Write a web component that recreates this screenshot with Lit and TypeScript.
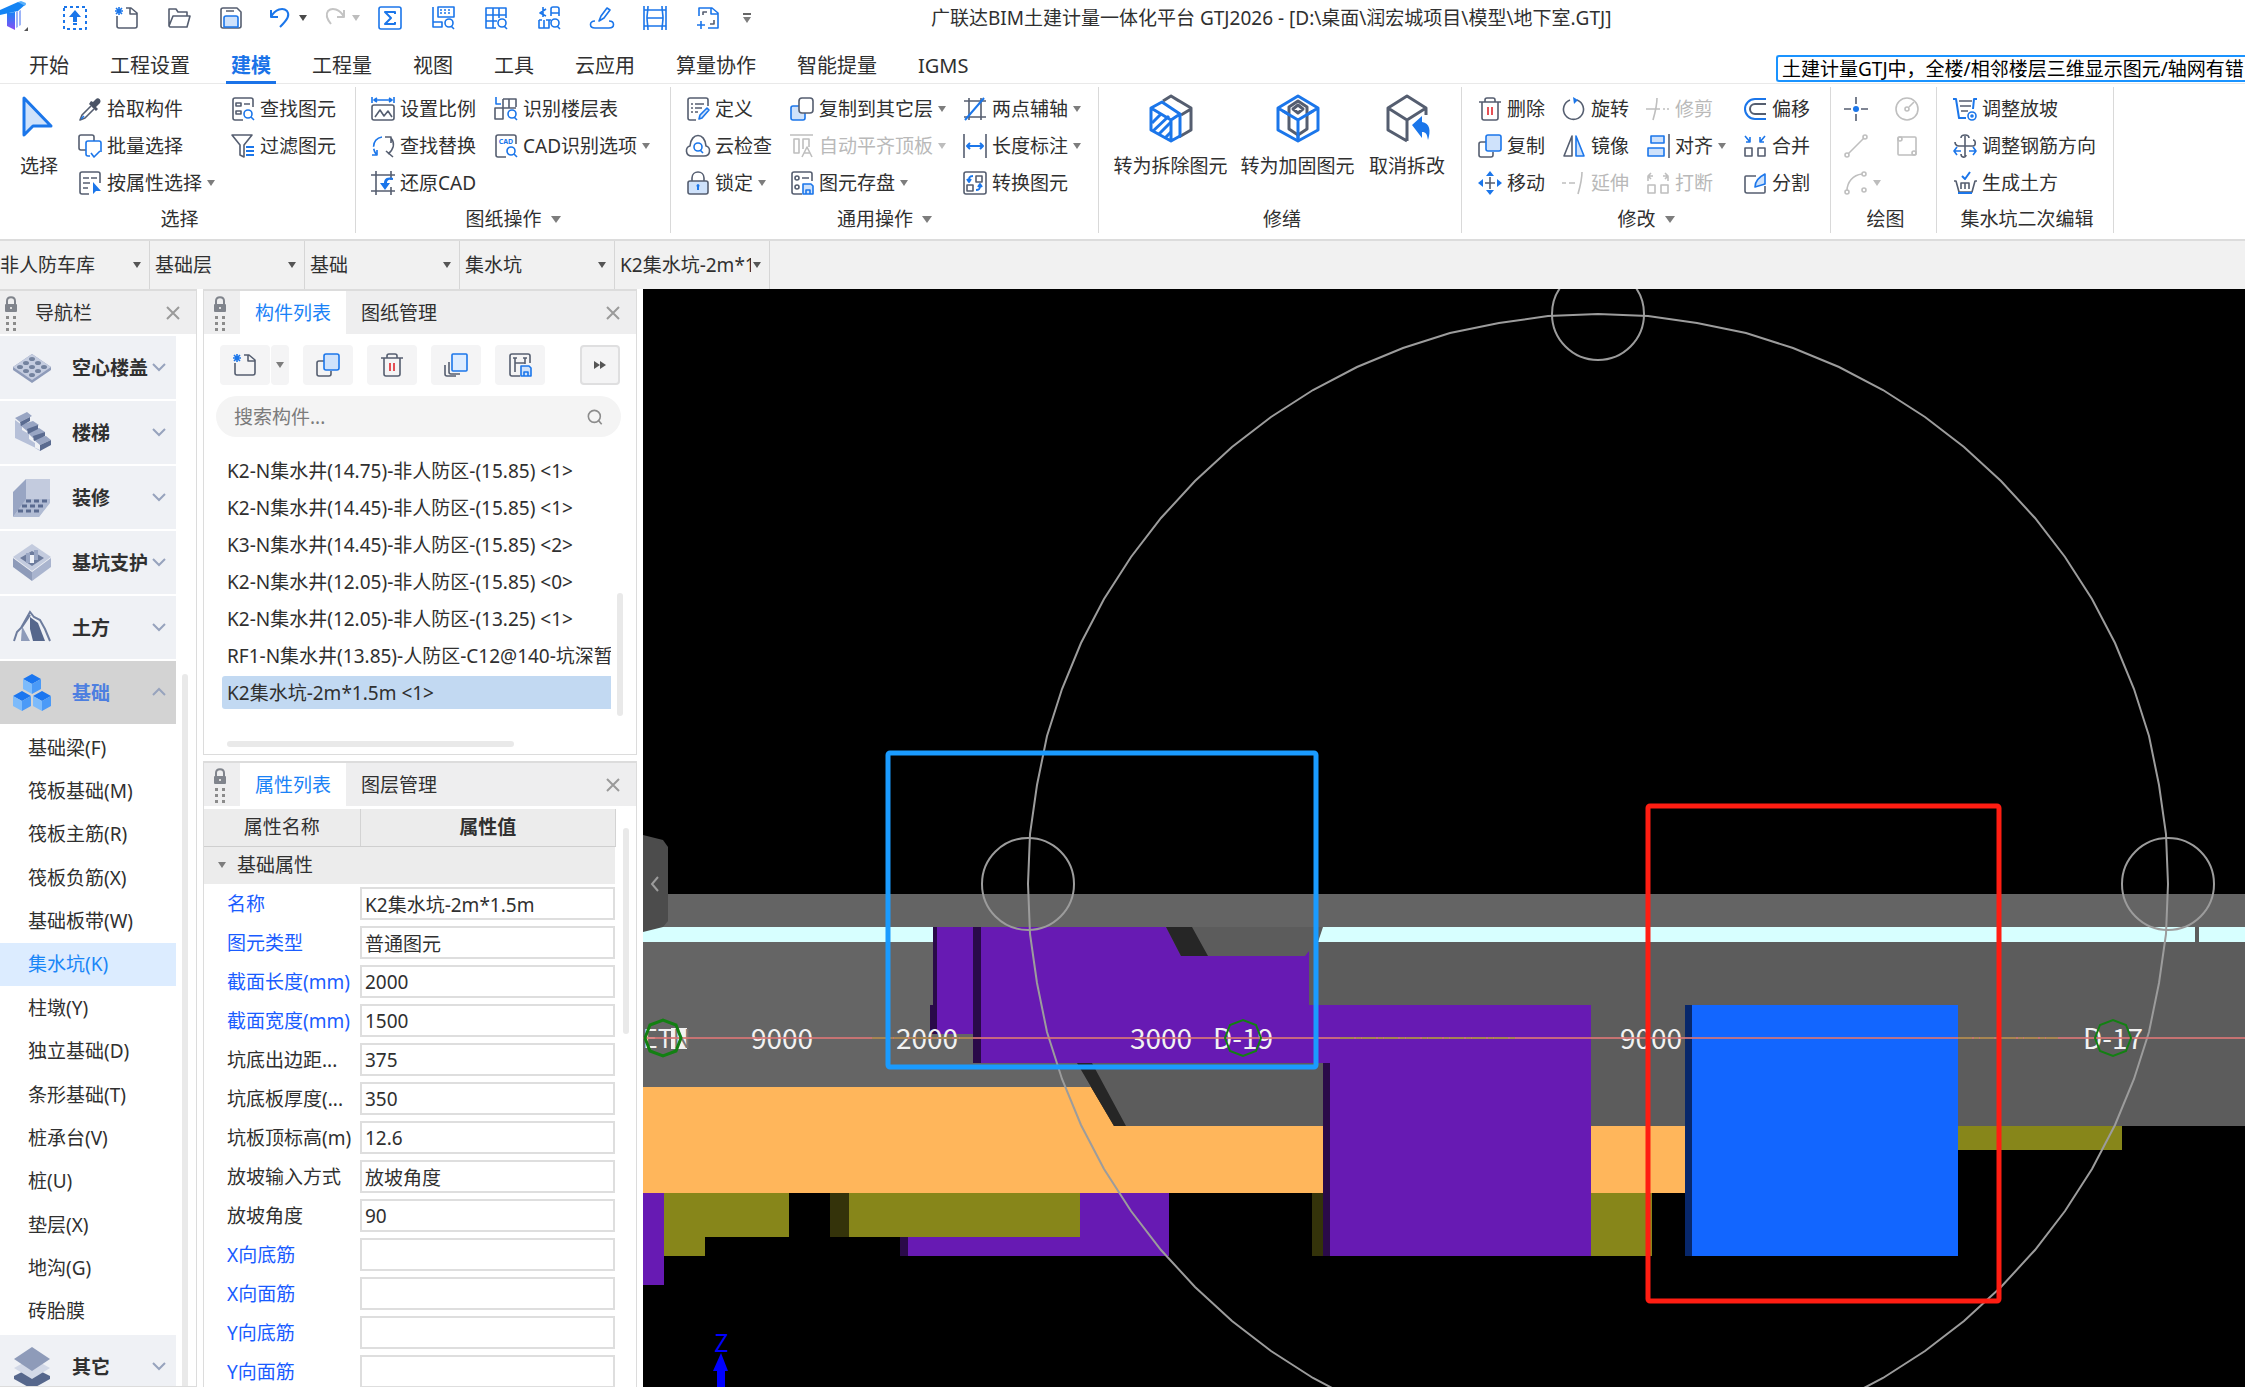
import { LitElement, html, svg, css, nothing } from "lit";
import { customElement, state } from "lit/decorators.js";
import { classMap } from "lit/directives/class-map.js";

/* ---------- icons, drawn on a 24 x 24 grid unless noted ---------- */

const icons: Record<string, unknown> = {
  upload: svg`<rect class="b dash" x="1" y="1" width="22" height="22"/><path class="bf" d="M12 4l6 7h-4v5h-4v-5H6z"/><path class="b w2" d="M10 18h4"/>`,
  newFile: svg`<path class="k" d="M2 10v10a2 2 0 0 0 2 2h16a2 2 0 0 0 2-2V7l-6-5h-5M15 2v6h7"/><path class="b" d="M1 2l6 6M7 2L1 8M4 1v8M0 5h8"/>`,
  open: svg`<path class="k" d="M2 20V3h7l2 3h9v4M2 20L6 10h17l-3 11H3z"/>`,
  save: svg`<path class="k" d="M4 2h14l4 4v14a2 2 0 0 1-2 2H4a2 2 0 0 1-2-2V4a2 2 0 0 1 2-2zM7 5h8"/><path class="l" d="M5 21v-9a2 2 0 0 1 2-2h10a2 2 0 0 1 2 2v9z"/>`,
  undo: svg`<path class="b w2" d="M2 4v7h7M2 11C6 3 14 1 18 5c3 4 1 8-7 16"/>`,
  redo: svg`<path class="off w2" d="M22 4v7h-7M22 11C18 3 10 1 6 5c-3 4-1 8 3 13"/>`,
  sum: svg`<rect class="b" x="1" y="1" width="22" height="22" rx="2"/><path class="b w2" d="M17 8V6H7l6 6-6 6h10v-2"/>`,
  calcFind: svg`<rect class="b" x="7" y="1" width="16" height="10"/><path class="b" d="M9 4h12M9 7h12" stroke-dasharray="2 2"/><path class="b" d="M2 1v20h9v-5H2"/><circle class="b" cx="18" cy="17" r="4"/><path class="b" d="M20 20l3 3"/>`,
  gridFind: svg`<path class="b" d="M12 22H2V2h20v10M9 2v20M15 2v10M2 9h20M2 15h11"/><circle class="b" cx="18" cy="17" r="4"/><path class="b" d="M20 20l3 3"/>`,
  partFind: svg`<path class="b" d="M9 3L3 7l6 3M6 1v10M14 10V3a2 2 0 0 1 2-2h4a2 2 0 0 1 2 2v7M14 7h8M2 14v8h10v-8M7 14v8M2 14h3M9 14h5"/><circle class="b" cx="18" cy="17" r="4"/><path class="b" d="M20 20l3 3"/>`,
  brush: svg`<path class="b" d="M9 15l2-5 6-8 3 2-6 8zM5 15c-6 0-6 7 0 7h14c6 0 6-7 0-7"/>`,
  frame: svg`<path class="b" d="M1 0v24M23 0v24M5 0c0 5-1 8-1 12s1 7 1 12M19 0c0 5 1 8 1 12s-1 7-1 12M1 4h22M4 12h16M1 20h22"/>`,
  docAdd: svg`<path class="b" d="M3 10V2h13l6 5v15H12M15 2v6h7M1 19h8M5 15v8"/><path class="k" d="M7 9V6h4M18 14v4h-4"/>`,
  picker: svg`<path class="k" d="M13 9l-9 9-2 5 5-2 9-9"/><path class="kf" d="M11 7l7 7 2-2-2-2 4-4c2-3-2-6-4-4l-3 3-2-1z"/><path class="b" d="M3 22l3-3"/>`,
  batch: svg`<rect class="k" x="1" y="1" width="15" height="15" rx="2"/><path class="lw" d="M12 22H10a2 2 0 0 1-2-2V9a2 2 0 0 1 2-2h11a2 2 0 0 1 2 2v9"/><path class="b" d="M13 19l3 4 6-6"/>`,
  attrSel: svg`<path class="k" d="M22 12V3a2 2 0 0 0-2-2H4a2 2 0 0 0-2 2v18a2 2 0 0 0 2 2h7M5 7h6M13 7h6M5 12h7M5 17h5"/><path class="bf" d="M15 11v12l3-3h5z"/>`,
  findEl: svg`<path class="k" d="M22 10V3a2 2 0 0 0-2-2H4a2 2 0 0 0-2 2v18a2 2 0 0 0 2 2h8M5 6h5v3H5zM13 7h6M5 14h5v3H5z"/><circle class="b" cx="17" cy="17" r="4"/><path class="b" d="M20 20l3 3"/>`,
  filter: svg`<path class="k" d="M1 1h20l-8 10v12l-4-2V11z"/><path class="b w2" d="M15 13h8M15 17h8M15 21h8"/>`,
  scale: svg`<path class="b" d="M1 0v6M23 0v6M3 3h18M6 1L3 3l3 2M18 1l3 2-3 2"/><rect class="k" x="1" y="8" width="22" height="15" rx="2"/><path class="k" d="M4 20l5-7 4 6 4-5 4 6"/>`,
  replace: svg`<path class="b" stroke-dasharray="14 2" d="M11 3C3 4 0 13 5 20M1 21h5v-5"/><path class="k" d="M14 3h6v6M20 4c4 5 3 11-3 16M15 17l7 6"/>`,
  restore: svg`<path class="k" d="M5 0v24M0 4h24M20 0v9M0 20h24M20 16v8"/><path class="bf" d="M22 7c-8-2-9 3-9 5h-4l5 7 5-7h-3c0-2 1-4 6-3z"/>`,
  floorTab: svg`<path class="b" d="M2 0v7h5"/><path class="k" d="M9 2h13v8M9 2v20H1V11h21M15 2v9"/><circle class="b" cx="18" cy="17" r="4"/><path class="b" d="M20 20l3 3"/>`,
  cadOpt: svg`<path class="k" d="M22 10V3a2 2 0 0 0-2-2H4a2 2 0 0 0-2 2v18a2 2 0 0 0 2 2h8"/><text class="cad" x="12" y="10" text-anchor="middle">CAD</text><circle class="b" cx="17" cy="17" r="4"/><path class="b" d="M20 20l3 3"/>`,
  define: svg`<path class="k" d="M22 9V3a2 2 0 0 0-2-2H4a2 2 0 0 0-2 2v18a2 2 0 0 0 2 2h6M5 7h2M9 7h9M5 11h2M9 11h7M5 15h2M9 15h3"/><path class="l" d="M13 22l1-4 7-7 2 2-7 8z"/>`,
  cloud: svg`<path class="k" d="M6 22C-1 22-1 13 4 12 5-2 19-2 20 12c5 1 5 10-2 10z"/><circle class="b" cx="12" cy="13" r="4"/><path class="b" d="M14 16l3 3"/>`,
  lock: svg`<rect class="lk" x="2" y="10" width="20" height="13" rx="2"/><path class="k" d="M6 10V7c0-8 12-8 12 0v3"/><path class="bf" d="M12 13a2 2 0 0 1 1 3v3h-2v-3a2 2 0 0 1 1-3z"/>`,
  copyFloor: svg`<rect class="l" x="1" y="9" width="14" height="14" rx="2"/><rect class="kw" x="9" y="1" width="14" height="15" rx="3"/>`,
  alignTop: svg`<path class="k" d="M0 1h23M4 5h5v14H4zM13 15V5h6v8M12 23l5-10 5 10M14 19h6"/>`,
  store: svg`<path class="k" d="M22 10V3a2 2 0 0 0-2-2H4a2 2 0 0 0-2 2v18a2 2 0 0 0 2 2h8M12 7h7"/><circle class="k" cx="7" cy="7" r="2"/><circle class="k" cx="7" cy="16" r="2"/><path class="l" d="M13 13h8l2 2v8H13zM16 23v-4h4v4"/>`,
  axis: svg`<path class="k" d="M6 1v22M18 1v22M1 4h22M1 20h22"/><path class="b w2" d="M2 23L21 1"/>`,
  dim: svg`<path class="k" d="M1 0v24M23 0v24"/><path class="b w2" d="M4 12h16M7 9l-3 3 3 3M17 9l3 3-3 3"/>`,
  convert: svg`<rect class="k" x="1" y="1" width="22" height="22" rx="2"/><path class="k" d="M13 5h6v6h-6zM4 14h6v6H4z"/><path class="b w2" d="M10 5c-4 0-4 2-4 5M4 8l2 3 2-3M13 19c4 0 4-2 4-4M15 16l2-3 2 3"/>`,
  trash: svg`<path class="k" d="M1 5h22M7 5V3a2 2 0 0 1 2-2h6a2 2 0 0 1 2 2v2M4 5v16a2 2 0 0 0 2 2h12a2 2 0 0 0 2-2V5"/><path class="r" d="M10 10v8M14 10v8"/>`,
  copy: svg`<path class="k" d="M9 8H3a2 2 0 0 0-2 2v11a2 2 0 0 0 2 2h10a2 2 0 0 0 2-2v-3"/><rect class="l" x="8" y="1" width="15" height="16" rx="2"/>`,
  move: svg`<path class="k" d="M12 6v12M7 12h10"/><path class="bf" d="M12 0l4 5H8zM12 24l4-5H8zM0 12l5-4v8zM24 12l-5-4v8z"/>`,
  rotate: svg`<path class="k" d="M15 3a10 10 0 1 1-7 0"/><path class="bf" d="M11 0l5 3-4 4z"/>`,
  mirror: svg`<path class="k" d="M10 2v20H2z"/><path class="l" d="M14 2v20h8z"/>`,
  extend: svg`<path class="k" d="M0 12h4M7 12h6M16 23c2-7 4-14 4-22"/>`,
  trim: svg`<path class="k" d="M7 23c2-7 4-14 4-22M0 12h14M17 12h2M21 12h2"/>`,
  align: svg`<path class="k" d="M23 0v24"/><rect class="l" x="5" y="2" width="13" height="7"/><rect class="l" x="2" y="14" width="16" height="8"/>`,
  split: svg`<path class="k" d="M2 14h7v8H2zM15 14h7v8h-7zM7 5H2M5 2L2 5l3 3M2 5v5M17 5h5M19 2l3 3-3 3M22 5v5"/>`,
  offset: svg`<path class="b w2" d="M23 2H12a10 10 0 0 0 0 20h11"/><path class="k w2" d="M23 7H12a5 5 0 0 0 0 10h11"/>`,
  merge: svg`<path class="k" d="M2 14h7v8H2zM15 14h7v8h-7z"/><path class="b" d="M2 2l5 6M7 3v5H3M22 2l-5 6M17 3v5h4"/>`,
  divide: svg`<path class="k" d="M13 5H3a1 1 0 0 0-1 1v14a2 2 0 0 0 2 2h17a1 1 0 0 0 1-1v-6"/><path class="l" d="M12 16c0-5 4-10 10-13v10z"/>`,
  point: svg`<path class="k" d="M12 0v7M12 17v7M0 12h7M17 12h7"/><circle class="bf" cx="12" cy="12" r="3"/>`,
  circle: svg`<circle class="k" cx="12" cy="12" r="11"/><circle class="k" cx="12" cy="12" r="2"/><path class="k" d="M14 10l5-5"/>`,
  line: svg`<path class="k" d="M4 20L20 4"/><circle class="k" cx="3" cy="21" r="2"/><circle class="k" cx="21" cy="3" r="2"/>`,
  rect: svg`<rect class="k" x="3" y="3" width="18" height="18" rx="1"/><circle class="k" cx="5" cy="5" r="2"/><circle class="k" cx="19" cy="19" r="2"/>`,
  arc: svg`<path class="k" d="M3 20C3 11 9 4 18 3"/><circle class="k" cx="3" cy="21" r="2"/><circle class="k" cx="20" cy="3" r="2"/><circle class="k" cx="20" cy="19" r="2"/>`,
  slope: svg`<path class="b w2" d="M0 2h3l3 19h7M24 2h-3l-1 10"/><path class="k" d="M6 4h13M7 9h11M8 14h7"/><circle class="b" cx="19" cy="19" r="4"/><circle class="b" cx="19" cy="19" r="1"/>`,
  rebar: svg`<path class="k" d="M12 2v20M2 8c0 5 5 4 10 4h8c3 0 3-6 0-6M8 4c0-4 8-4 8 0M8 20c0 4 5 4 5 1"/><path class="b" d="M8 17H1M4 13l-3 4 3 4M16 17h7M20 13l3 4-3 4"/>`,
  earth: svg`<path class="b w2" d="M9 5l3 3 5-7"/><path class="k" d="M1 10h2l3 11h13l3-11h2M8 18v-6h8v6M12 12v6"/><path class="b w2" d="M5 22h14"/>`,
  multi: svg`<path class="k" d="M5 9v10a2 2 0 0 0 2 2h9M1 12v9a2 2 0 0 0 2 2h9"/><rect class="l pale" x="8" y="1" width="15" height="17" rx="1"/>`,
  saveFrame: svg`<path class="k" d="M22 10V3a2 2 0 0 0-2-2H4a2 2 0 0 0-2 2v18a2 2 0 0 0 2 2h8M7 5v14M17 5v6M7 10h10M5 5h4M15 5h4"/><path class="l" d="M13 13h8l2 2v8H13zM16 23v-4h4v4"/>`,
  search: svg`<circle class="g" cx="11" cy="11" r="9"/><path class="g" d="M17 17l5 6"/>`,
};

const icon = (name: string, cls = "") => html`<svg class="ic ${cls}" viewBox="0 0 24 24" aria-hidden="true">${icons[name]}</svg>`;

/* large ribbon icons, 44 x 50 */
const bigIcons: Record<string, unknown> = {
  select: svg`<path class="l w3" d="M7 5v37l9-9h18z"/>`,
  demolish: svg`<path class="k w3" d="M14 8l8-5 20 12v22l-12 7M32 22l10-6M30 8l-8-5"/><path class="b w3" d="M2 15l11-6 18 12v22l-9 5L2 37zM2 15l20 12v20M22 27l9-6"/><path class="b w3" d="M3 30l9-9M4 38l16-15M10 41l12-12M16 45l6-6"/>`,
  reinforce: svg`<path class="b w3" d="M22 3l20 12v22L22 48 2 37V15zM2 15l20 12 20-12M22 27v21"/><path class="kw w3" d="M22 8l9 6v22l-9 6-9-6V14z"/><path class="b w3" d="M7 18l15 9 15-9M22 27v18"/><path class="k w3" d="M22 12l5 4-5 4-5-4z"/>`,
  cancel: svg`<path class="k w3" d="M41 22v-7L22 3 3 15v22l19 11M3 15l19 12 19-12M22 27v21"/><path class="bf" d="M27 32l10-9v6c8 1 9 9 6 18-1-6-2-8-6-8v6z"/>`,
};

const iconCss = css`
  .ic { width: 24px; height: 24px; flex: none; overflow: visible; stroke-width: 1.6; stroke-linejoin: round; }
  .k { stroke: #555e70; fill: none; }
  .kw { stroke: #555e70; fill: #fff; }
  .kf { fill: #4a5365; }
  .lk { stroke: #555e70; fill: #cfe2fb; }
  .b { stroke: #1b76ea; fill: none; }
  .bf { fill: #1b76ea; }
  .l { stroke: #1b76ea; fill: #cfe2fb; }
  .pale { fill: #ddecff; }
  .lw { stroke: #1b76ea; fill: #fff; }
  .r { stroke: #e0262c; fill: none; }
  .g { stroke: #8c8c8c; fill: none; }
  .off { stroke: #c4c4c4; fill: none; }
  .w2 { stroke-width: 2; }
  .w3 { stroke-width: 3; }
  .dash { stroke-dasharray: 3 3; stroke-width: 2; }
  .cad { font-size: 7px; font-weight: 700; fill: #1b76ea; }
  .dim .k, .dim .b { stroke: #bfbfbf; }
`;

const base = css`
  :host, * { box-sizing: border-box; }
  button, input, select {
    font: inherit; color: inherit; background: none; border: 0; margin: 0; padding: 0; text-align: left; border-radius: 0;
  }
  button { cursor: pointer; white-space: nowrap; }
  .tri { width: 0; height: 0; flex: none; border: 4px solid transparent; border-top: 6px solid #7d7d7d; border-bottom: 0; }
  .grow { flex: 1; }
`;

/* ---------- title bar, tabs, ribbon ---------- */

type Cmd = { i: string; t?: string; arrow?: boolean; dim?: boolean; label?: string } | null;
type Group = { id: string; title: string; arrow?: boolean; big?: { i: string; t: string }[]; cols?: Cmd[][] };

const groups: Group[] = [
  {
    id: "select", title: "选择", big: [{ i: "select", t: "选择" }],
    cols: [
      [{ i: "picker", t: "拾取构件" }, { i: "batch", t: "批量选择" }, { i: "attrSel", t: "按属性选择", arrow: true }],
      [{ i: "findEl", t: "查找图元" }, { i: "filter", t: "过滤图元" }],
    ],
  },
  {
    id: "drawing", title: "图纸操作", arrow: true,
    cols: [
      [{ i: "scale", t: "设置比例" }, { i: "replace", t: "查找替换" }, { i: "restore", t: "还原CAD" }],
      [{ i: "floorTab", t: "识别楼层表" }, { i: "cadOpt", t: "CAD识别选项", arrow: true }],
    ],
  },
  {
    id: "common", title: "通用操作", arrow: true,
    cols: [
      [{ i: "define", t: "定义" }, { i: "cloud", t: "云检查" }, { i: "lock", t: "锁定", arrow: true }],
      [{ i: "copyFloor", t: "复制到其它层", arrow: true }, { i: "alignTop", t: "自动平齐顶板", arrow: true, dim: true }, { i: "store", t: "图元存盘", arrow: true }],
      [{ i: "axis", t: "两点辅轴", arrow: true }, { i: "dim", t: "长度标注", arrow: true }, { i: "convert", t: "转换图元" }],
    ],
  },
  {
    id: "repair", title: "修缮",
    big: [{ i: "demolish", t: "转为拆除图元" }, { i: "reinforce", t: "转为加固图元" }, { i: "cancel", t: "取消拆改" }],
  },
  {
    id: "modify", title: "修改", arrow: true,
    cols: [
      [{ i: "trash", t: "删除" }, { i: "copy", t: "复制" }, { i: "move", t: "移动" }],
      [{ i: "rotate", t: "旋转" }, { i: "mirror", t: "镜像" }, { i: "extend", t: "延伸", dim: true }],
      [{ i: "trim", t: "修剪", dim: true }, { i: "align", t: "对齐", arrow: true }, { i: "split", t: "打断", dim: true }],
      [{ i: "offset", t: "偏移" }, { i: "merge", t: "合并" }, { i: "divide", t: "分割" }],
    ],
  },
  {
    id: "draw", title: "绘图",
    cols: [
      [{ i: "point", label: "点" }, { i: "line", dim: true, label: "直线" }, { i: "arc", dim: true, arrow: true, label: "弧" }],
      [{ i: "circle", dim: true, label: "圆" }, { i: "rect", dim: true, label: "矩形" }],
    ],
  },
  {
    id: "sump", title: "集水坑二次编辑",
    cols: [[{ i: "slope", t: "调整放坡" }, { i: "rebar", t: "调整钢筋方向" }, { i: "earth", t: "生成土方" }]],
  },
];

@customElement("gtj-ribbon")
class GtjRibbon extends LitElement {
  static styles = [base, iconCss, css`
    :host { display: block; background: #fff; }
    .title { display: flex; align-items: center; height: 36px; white-space: nowrap; }
    .logo { width: 49px; height: 36px; flex: none; }
    .qa { width: 52px; height: 36px; display: flex; align-items: center; justify-content: center; }
    .tools .qa { width: 53px; }
    .hist { width: 53px; display: flex; align-items: center; justify-content: flex-end; gap: 6px; padding-right: 3px; }
    .hist button { display: flex; }
    .tri.dark { border-top-color: #4a4a4a; }
    .tri.faint { border-top-color: #bdbdbd; }
    .tools { display: flex; }
    .more { width: 26px; display: flex; flex-direction: column; align-items: center; gap: 2px; }
    .more i { width: 8px; height: 2px; background: #666; }
    .name { margin: 0 0 0 171px; font-size: 19px; font-weight: 400; line-height: 24px; }
    .tabs { display: flex; gap: 31px; height: 48px; border-bottom: 1px solid #e9e9e9; padding-left: 24px; font-size: 20px; }
    .tab { height: 48px; padding: 12px 5px 0; white-space: nowrap; }
    .tab.on { color: #1b73e8; font-weight: 700; box-shadow: inset 0 -3px #1b73e8; }
    .ticker {
      width: 469px; height: 27px; margin-top: 19px; flex: none; align-self: flex-start; overflow: hidden;
      border: 2px solid #1a93ff; border-right: 0; border-radius: 3px 0 0 3px; padding-left: 4px;
      font-size: 19px; line-height: 24px; color: #000; text-decoration: none; white-space: nowrap;
    }
    .ribbon { display: flex; height: 155px; padding: 3px 0 6px; }
    .group { display: flex; flex-direction: column; border-right: 1px solid #d9d9d9; padding-top: 3px; }
    .cols { display: grid; height: 111px; }
    .col { display: flex; flex-direction: column; }
    .cmd { height: 37px; display: flex; align-items: center; gap: 5px; }
    .cmd.dim { color: #b9b9b9; }
    .cmd.dim .tri { border-top-color: #bdbdbd; }
    .big { display: flex; flex-direction: column; align-items: center; gap: 11px; padding-top: 3px; }
    .big svg { width: 44px; height: 50px; overflow: visible; stroke-linejoin: round; }
    .foot { height: 32px; padding: 4px 0 0 4px; display: flex; align-items: center; justify-content: center; gap: 9px; }
    .foot.menu { padding-left: 0; }
    .foot .tri { border-width: 7px 5px 0; }
    .select .cols { grid-template-columns: 78px 153px 124px; }
    .drawing .cols { grid-template-columns: 123px 176px; padding-left: 15px; }
    .common .cols { grid-template-columns: 104px 173px 135px; padding-left: 15px; }
    .repair .cols { grid-template-columns: 127px 127px 92px; padding: 0 8px; }
    .modify .cols { grid-template-columns: 84px 84px 97px 87px; padding-left: 16px; }
    .draw .cols { grid-template-columns: 51px 41px; padding-left: 13px; }
    .sump .cols { grid-template-columns: 160px; padding-left: 16px; }
  `];

  private tabs = ["开始", "工程设置", "建模", "工程量", "视图", "工具", "云应用", "算量协作", "智能提量", "IGMS"];
  @state() private active = "建模";

  private cmd(c: Cmd) {
    if (!c) return nothing;
    return html`<button class=${classMap({ cmd: true, dim: !!c.dim })} ?disabled=${!!c.dim} aria-label=${c.t ?? c.label ?? ""}>
      ${icon(c.i)}${c.t ? html`<span>${c.t}</span>` : nothing}${c.arrow ? html`<span class="tri"></span>` : nothing}
    </button>`;
  }

  render() {
    const files: [string, string][] = [["upload", "上传"], ["newFile", "新建"], ["open", "打开"], ["save", "保存"]];
    const tools: [string, string][] = [
      ["sum", "汇总计算"], ["calcFind", "查看工程量"], ["gridFind", "查看报表"], ["partFind", "查找构件"],
      ["brush", "做法刷"], ["frame", "钢筋三维"], ["docAdd", "添加图纸"],
    ];
    return html`
      <header class="title">
        <svg class="logo" viewBox="0 0 49 36" aria-hidden="true">
          <defs><linearGradient id="lg" x1="0" y1="0" x2="0" y2="1"><stop offset="0" stop-color="#1584f5"/><stop offset="1" stop-color="#8a4df5"/></linearGradient></defs>
          <path fill="#1484f4" d="M0 10L18 2l8 2-8 7L0 15z"/>
          <path fill="#5ab0fa" d="M18 2l3-1 5 2-1 3z"/>
          <path fill="url(#lg)" d="M7 13l8-1v18l-8-4z"/>
          <path fill="#9db4f8" d="M16 12l2-1v16l-2 1zM19 11l2-1v15l-2 1z"/>
          <path fill="#555" d="M28 27v4h-4z"/>
        </svg>
        ${files.map(([i, l]) => html`<button class="qa" aria-label=${l}>${icon(i)}</button>`)}
        <div class="hist"><button aria-label="撤销">${icon("undo")}</button><button aria-label="撤销记录"><span class="tri dark"></span></button></div>
        <div class="hist"><button aria-label="恢复">${icon("redo")}</button><button aria-label="恢复记录"><span class="tri faint"></span></button></div>
        <div class="tools">${tools.map(([i, l]) => html`<button class="qa" aria-label=${l}>${icon(i)}</button>`)}</div>
        <button class="more" aria-label="自定义快速访问栏"><i></i><span class="tri"></span></button>
        <h1 class="name">广联达BIM土建计量一体化平台 GTJ2026 - [D:\\桌面\\润宏城项目\\模型\\地下室.GTJ]</h1>
      </header>
      <nav class="tabs">
        ${this.tabs.map((t) => html`<button class=${classMap({ tab: true, on: t === this.active })} @click=${() => (this.active = t)}>${t}</button>`)}
        <span class="grow"></span>
        <a class="ticker" href="#notice">土建计量GTJ中，全楼/相邻楼层三维显示图元/轴网有错</a>
      </nav>
      <div class="ribbon">
        ${groups.map((g) => html`<section class="group ${g.id}">
          <div class="cols">
            ${g.big?.map((b) => html`<button class="big"><svg viewBox="0 0 44 50" aria-hidden="true">${bigIcons[b.i]}</svg><span>${b.t}</span></button>`)}
            ${g.cols?.map((c) => html`<div class="col">${c.map((x) => this.cmd(x))}</div>`)}
          </div>
          <div class=${classMap({ foot: true, menu: !!g.arrow })}><span>${g.title}</span>${g.arrow ? html`<span class="tri"></span>` : nothing}</div>
        </section>`)}
      </div>`;
  }
}

/* ---------- floor and component selectors ---------- */

@customElement("gtj-selectors")
class GtjSelectors extends LitElement {
  static styles = [base, css`
    :host { display: flex; height: 50px; background: #f1f1f1; border-top: 2px solid #dcdcdc; }
    .pick { display: grid; grid-template-columns: 1fr auto; align-items: center; width: 155px; border-right: 1px solid #d6d6d6; }
    .pick:first-child { width: 150px; }
    .pick:first-child select { padding-left: 0; }
    select { appearance: none; grid-area: 1 / 1 / 2 / 3; width: 100%; height: 48px; padding: 0 18px 0 5px; outline: 0; text-overflow: clip; }
    .tri { grid-area: 1 / 2; margin-right: 8px; border-top-color: #555; pointer-events: none; }
  `];
  render() {
    const items: [string, string][] = [["区域", "非人防车库"], ["楼层", "基础层"], ["构件类别", "基础"], ["构件类型", "集水坑"], ["构件", "K2集水坑-2m*1.5m"]];
    return items.map(([l, v]) => html`<div class="pick"><select aria-label=${l}><option>${v}</option></select><span class="tri"></span></div>`);
  }
}

/* ---------- docked panels ---------- */

const panelCss = css`
  :host { display: flex; flex-direction: column; background: #fff; border: 1px solid #dcdcdc; border-top-width: 2px; overflow: hidden; }
  .head { display: flex; align-items: center; height: 43px; flex: none; background: #eeeeef; }
  .grip { width: 16px; height: 36px; flex: none; margin-top: 2px; }
  .close { width: 20px; height: 20px; margin-right: 13px; }
  .close svg { width: 20px; height: 20px; display: block; }
  .tab { height: 43px; padding: 0 15px; }
  .tab.on { background: #fff; color: #1a82f7; }
  .thumb { width: 6px; border-radius: 3px; background: #e9e9e9; }
`;

const grip = svg`<path d="M4 9V5c0-5 8-5 8 0v4" fill="none" stroke="#80848c" stroke-width="2"/><rect x="2" y="8" width="12" height="8" rx="1" fill="#80848c"/><path d="M7 11h2v2H7z" fill="#ddd"/><path fill="#8b8b8b" d="M3 20h3v3H3zM10 20h3v3h-3zM3 26h3v3H3zM10 26h3v3h-3zM3 32h3v3H3zM10 32h3v3h-3z"/>`;
const gripIcon = html`<svg class="grip" viewBox="0 0 16 36" aria-hidden="true">${grip}</svg>`;
const closeBtn = html`<button class="close" aria-label="关闭"><svg viewBox="0 0 20 20"><path d="M4 4l12 12M16 4L4 16" stroke="#9a9a9a" stroke-width="2" fill="none"/></svg></button>`;

/* category pictures, 38 x 38 */
const navArt: Record<string, unknown> = {
  hollow: svg`<path fill="#8e9bb9" d="M0 18L19 5l19 13v3L19 34 0 21z"/><path fill="#c5cde0" d="M0 18L19 5l19 13-19 13z"/><g fill="#74839f"><ellipse cx="19" cy="10" rx="3" ry="2"/><ellipse cx="13" cy="14" rx="3" ry="2"/><ellipse cx="25" cy="14" rx="3" ry="2"/><ellipse cx="7" cy="18" rx="3" ry="2"/><ellipse cx="19" cy="18" rx="3" ry="2"/><ellipse cx="31" cy="18" rx="3" ry="2"/><ellipse cx="13" cy="22" rx="3" ry="2"/><ellipse cx="25" cy="22" rx="3" ry="2"/><ellipse cx="19" cy="26" rx="3" ry="2"/></g>`,
  stairs: svg`<path fill="#b6c0d8" d="M2 6l7 5v5l7 4v5l6 4v5l5 3v-1L2 24z"/><path fill="#98a5c3" d="M2 4l12-6 5 4-12 6zM7 11l13-4 6 4-12 6zM14 18l12-4 6 4-12 6zM20 25l13-3 5 4-11 5z"/><path fill="#5a6b90" d="M7 8l10-5v4L8 12zM14 15l11-4v4l-10 5zM20 22l12-4v4l-11 5zM27 31l11-5v5l-11 6z"/>`,
  decor: svg`<path fill="#c3cbde" d="M13 0h24v22l-11 16H0l13-16z"/><path fill="#98a5c3" d="M13 0L0 13v25l13-16z"/><path fill="#b0bbd3" d="M13 20h24v4L26 38H0z"/><path stroke="#5a6b90" stroke-width="3" stroke-dasharray="5 3" d="M13 22h23M9 27h22M5 32h23" fill="none"/>`,
  pit: svg`<path fill="#8e9bb9" d="M0 14v9l19 14V28z"/><path fill="#a9b4ce" d="M38 14v9L19 37V28z"/><path fill="#c3cbde" d="M19 0l19 13-19 14L0 13z"/><path fill="#6d7c9d" d="M19 7l12 7-12 8-12-8z"/><path fill="#9aa7c4" d="M13 9h4v10h-4zM21 6h4v10h-4z"/><path fill="#eef1f7" d="M17 11h4v8h-4z"/>`,
  earth: svg`<path fill="#8e9bb9" d="M8 32l1-15 8 15z"/><path fill="#56678c" d="M17 8l8 6 7 18H20l-3-12z"/><path fill="none" stroke="#6d7c9d" stroke-width="2" d="M1 32l3-9 4-4 9-16 4 5 6 3 5 9 5 12M9 18l8-12"/>`,
  base: svg`<path fill="#1b76f0" d="M19 0l9 5-9 5-9-5zM9 17l9 5-9 5-9-5zM29 17l9 5-9 5-9-5z"/><path fill="#7dbbfb" d="M10 5l9 5v10l-9-5zM0 22l9 5v10l-9-5zM20 22l9 5v10l-9-5z"/><path fill="#4b9af7" d="M28 5l-9 5v10l9-5zM18 22l-9 5v10l9-5zM38 22l-9 5v10l9-5z"/>`,
  other: svg`<path fill="#56678c" d="M1 28l18-9 18 9v3L19 41 1 31z"/><path fill="#d3d9e7" d="M1 20l18-10 18 10-18 11z"/><path fill="#8e9bb9" d="M1 11L19-1l18 12-18 12z"/>`,
};

@customElement("gtj-nav")
class GtjNav extends LitElement {
  static styles = [base, panelCss, css`
    :host { border-left: 0; }
    .grip { margin-left: 3px; }
    .caption { margin: 0 0 0 16px; flex: 1; font-size: 19px; font-weight: 400; }
    .body { display: flex; flex: 1; min-height: 0; padding-top: 2px; overflow: hidden; }
    .tree { width: 176px; display: flex; flex-direction: column; gap: 2px; }
    .cat { height: 63px; flex: none; display: flex; align-items: center; padding: 0 10px 0 13px; background: #eff1f5; font-weight: 700; }
    .cat span { margin-left: 21px; flex: 1; }
    .cat svg { width: 38px; height: 38px; flex: none; overflow: visible; }
    .cat .chev { width: 14px; height: 14px; }
    .chev path { fill: none; stroke: #97a3bd; stroke-width: 2; }
    .cat.open { background: #d3d3d3; color: #4d7fe0; }
    .kids { height: 607px; flex: none; display: grid; grid-auto-rows: 1fr; list-style: none; margin: 0; padding: 0; }
    .kid { width: 100%; height: 100%; padding-left: 28px; }
    .kid.on { background: #dcecff; color: #1a86f7; }
    .thumb { margin: 338px 0 0 6px; border-radius: 3px 3px 0 0; }
  `];
  @state() private current = "集水坑(K)";

  private cat(art: string, label: string, open = false) {
    return html`<button class=${classMap({ cat: true, open })} aria-expanded=${open}>
      <svg viewBox="0 0 38 38" aria-hidden="true">${navArt[art]}</svg><span>${label}</span>
      <svg class="chev" viewBox="0 0 14 14"><path d=${open ? "M1 9l6-6 6 6" : "M1 3l6 6 6-6"}/></svg>
    </button>`;
  }

  render() {
    const kids = ["基础梁(F)", "筏板基础(M)", "筏板主筋(R)", "筏板负筋(X)", "基础板带(W)", "集水坑(K)", "柱墩(Y)", "独立基础(D)",
      "条形基础(T)", "桩承台(V)", "桩(U)", "垫层(X)", "地沟(G)", "砖胎膜"];
    return html`
      <div class="head">${gripIcon}<h2 class="caption">导航栏</h2>${closeBtn}</div>
      <div class="body">
        <div class="tree">
          ${this.cat("hollow", "空心楼盖")}${this.cat("stairs", "楼梯")}${this.cat("decor", "装修")}
          ${this.cat("pit", "基坑支护")}${this.cat("earth", "土方")}${this.cat("base", "基础", true)}
          <ul class="kids">${kids.map((k) => html`<li><button class=${classMap({ kid: true, on: k === this.current })} @click=${() => (this.current = k)}>${k}</button></li>`)}</ul>
          ${this.cat("other", "其它")}
        </div>
        <div class="thumb"></div>
      </div>`;
  }
}

@customElement("gtj-components")
class GtjComponents extends LitElement {
  static styles = [base, iconCss, panelCss, css`
    :host { height: 466px; flex: none; }
    .grip { margin: 2px 12px 0 8px; }
    .bar { display: flex; gap: 14px; padding: 11px 16px 0; flex: none; }
    .bar button { width: 50px; height: 40px; border-radius: 4px; background: #f4f4f5; display: flex; align-items: center; justify-content: center; }
    .pair { display: flex; gap: 1px; }
    .bar .drop { width: 18px; }
    .bar .next { width: 40px; border: 2px solid #dfdfe0; margin-left: auto; gap: 0; }
    .next i { border: 4px solid transparent; border-left: 6px solid #555; border-right: 0; }
    .find { display: flex; align-items: center; height: 41px; flex: none; margin: 11px 15px 0 12px; padding: 0 18px; border-radius: 21px; background: #f4f4f4; }
    .find input { flex: 1; min-width: 0; outline: 0; }
    .find input::placeholder { color: #7b7b7b; opacity: 1; }
    .find svg { width: 16px; height: 16px; stroke-width: 2.4; }
    .area { display: flex; flex: 1; gap: 6px; margin: 17px 13px 0 18px; min-height: 0; }
    .list { flex: 1; min-width: 0; list-style: none; margin: 0; padding: 0; display: flex; flex-direction: column; gap: 4px; overflow: hidden; }
    .item { display: block; width: 100%; height: 33px; padding-left: 5px; white-space: pre; overflow: hidden; border-radius: 3px 0 0 3px; }
    .item.on { background: #c2d9f2; }
    .area .thumb { height: 123px; margin-top: 139px; }
    .hthumb { width: 287px; height: 6px; margin: 0 0 7px 23px; flex: none; border-radius: 3px; background: #e9e9e9; }
  `];
  private items = ["K2-N集水井(14.75)-非人防区-(15.85) <1>", "K2-N集水井(14.45)-非人防区-(15.85) <1>", "K3-N集水井(14.45)-非人防区-(15.85) <2>",
    "K2-N集水井(12.05)-非人防区-(15.85) <0>", "K2-N集水井(12.05)-非人防区-(13.25) <1>", "RF1-N集水井(13.85)-人防区-C12@140-坑深暂", "K2集水坑-2m*1.5m <1>"];
  @state() private picked = 6;

  render() {
    return html`
      <div class="head">${gripIcon}<button class="tab on">构件列表</button><button class="tab">图纸管理</button><span class="grow"></span>${closeBtn}</div>
      <div class="bar">
        <div class="pair"><button aria-label="新建">${icon("newFile")}</button><button class="drop" aria-label="新建选项"><span class="tri"></span></button></div>
        <button aria-label="复制">${icon("copy")}</button>
        <button aria-label="删除">${icon("trash")}</button>
        <button aria-label="层间复制">${icon("multi")}</button>
        <button aria-label="存盘">${icon("saveFrame")}</button>
        <button class="next" aria-label="更多"><i></i><i></i></button>
      </div>
      <label class="find"><input type="text" placeholder="搜索构件..." aria-label="搜索构件" />${icon("search")}</label>
      <div class="area">
        <ul class="list">${this.items.map((t, n) => html`<li><button class=${classMap({ item: true, on: n === this.picked })} @click=${() => (this.picked = n)}>${t}</button></li>`)}</ul>
        <div class="thumb"></div>
      </div>
      <div class="hthumb"></div>`;
  }
}

@customElement("gtj-properties")
class GtjProperties extends LitElement {
  static styles = [base, panelCss, css`
    :host { flex: 1; min-height: 0; border-bottom: 0; }
    .grip { margin: 2px 12px 0 8px; }
    .body { display: flex; gap: 7px; padding: 3px 7px 0 0; min-height: 0; }
    table { flex: 1; table-layout: fixed; border-collapse: collapse; width: 100%; }
    .c1 { width: 156px; }
    th, td { padding: 0; text-align: left; font-weight: 400; white-space: nowrap; }
    thead th { height: 37px; background: #ececec; text-align: center; border-bottom: 1px solid #cfcfcf; border-right: 1px solid #d3d3d3; }
    thead .val { font-weight: 700; }
    .sec { height: 38px; background: #ececec; border-right: 1px solid #fff; }
    .sec button { display: flex; align-items: center; gap: 11px; padding-left: 14px; }
    .row { height: 39px; }
    .row label { display: block; padding-left: 23px; }
    .row.blue label { color: #1a5cff; }
    .row input { display: block; height: 33px; border: 2px solid #dedede; padding: 0 3px; outline: 0; width: calc(100% - 1px); }
    .thumb { height: 206px; margin-top: 19px; flex: none; }
  `];
  private rows: [string, string, boolean][] = [
    ["名称", "K2集水坑-2m*1.5m", true], ["图元类型", "普通图元", true], ["截面长度(mm)", "2000", true], ["截面宽度(mm)", "1500", true],
    ["坑底出边距...", "375", false], ["坑底板厚度(...", "350", false], ["坑板顶标高(m)", "12.6", false], ["放坡输入方式", "放坡角度", false],
    ["放坡角度", "90", false], ["X向底筋", "", true], ["X向面筋", "", true], ["Y向底筋", "", true], ["Y向面筋", "", true],
  ];
  render() {
    return html`
      <div class="head">${gripIcon}<button class="tab on">属性列表</button><button class="tab">图层管理</button><span class="grow"></span>${closeBtn}</div>
      <div class="body">
        <table>
          <colgroup><col class="c1" /><col /></colgroup>
          <thead><tr><th scope="col">属性名称</th><th scope="col" class="val">属性值</th></tr></thead>
          <tbody>
            <tr><th class="sec" colspan="2" scope="colgroup"><button><span class="tri"></span>基础属性</button></th></tr>
            ${this.rows.map(([n, v, blue], i) => html`<tr class=${classMap({ row: true, blue })}>
              <th scope="row"><label for="p${i}">${n}</label></th><td><input id="p${i}" type="text" .value=${v} /></td></tr>`)}
          </tbody>
        </table>
        <div class="thumb"></div>
      </div>`;
  }
}

/* ---------- 3D model view ---------- */

/* closed polygon approximating a circle, as the viewer draws its orbit guide */
const ring = (cx: number, cy: number, r: number, n: number) =>
  Array.from({ length: n }, (_, i) => {
    const a = (i / n) * Math.PI * 2;
    return `${Math.round(cx + r * Math.cos(a))},${Math.round(cy + r * Math.sin(a))}`;
  }).join(" ");

@customElement("gtj-view")
class GtjView extends LitElement {
  static styles = [base, css`
    :host { display: block; position: relative; background: #000; overflow: hidden; }
    .scene { display: block; width: 100%; height: 100%; }
    .up { fill: #646464; } .slab { fill: #5c5c5c; } .slab2 { fill: #656565; } .glass { fill: #d7ffff; }
    .pit { fill: #671ab3; } .pitd { fill: #2a0a49; } .wedge { fill: #262626; } .fill { fill: #ffb65b; }
    .ol { fill: #87861a; } .old { fill: #34330a; } .sel { fill: #1266ff; } .seld { fill: #07276b; }
    .guide { fill: none; stroke: #9c9c9c; stroke-width: 2; }
    .axis { stroke: #d87676; stroke-width: 2; opacity: .85; }
    .hint { stroke: #a08a4a; stroke-width: 2; opacity: .8; }
    .node { fill: none; stroke: #128012; stroke-width: 2; }
    .node.bold { stroke-width: 3; }
    .plate { fill: #f2f2f2; }
    .note { font: 28px "Noto Sans CJK SC", sans-serif; fill: #f2f2f2; }
    .note.end { font-size: 25px; }
    .ink { fill: #777; }
    .z { font: 24px "Noto Sans CJK SC", sans-serif; fill: #0000ff; }
    .zf { fill: #0000ff; }
    .mark { fill: none; stroke-width: 5; stroke: #1a9bff; }
    .mark.red { stroke: #ff1d12; }
    .fold { position: absolute; left: 0; top: 546px; width: 25px; height: 97px; background: #4c4c4c; clip-path: polygon(0 0, 20px 5px, 25px 12px, 25px 86px, 20px 92px, 0 97px); padding-left: 7px; }
    .fold svg { display: block; width: 10px; height: 18px; }
  `];
  render() {
    return html`
      <svg class="scene" viewBox="643 289 1602 1098" preserveAspectRatio="xMinYMin slice" role="img" aria-label="三维模型视图">
        <rect class="up" x="643" y="894" width="1602" height="34"/>
        <rect class="slab2" x="643" y="942" width="520" height="145"/>
        <path class="slab" d="M1090 927H2245V1126H1114L1077 1062z"/>
        <path class="glass" d="M643 927H934V942H643zM1323 927H2195V942H1318zM2199 927H2245V942H2199z"/>
        <path class="fill" d="M643 1087H1091L1114 1126H1323V1193H643zM1591 1126H1685V1193H1591z"/>
        <path class="pit" d="M937 927H1166L1181 956H1305L1309 951V1005H1591V1256H1330L1323 1063H973V1034H937z"/>
        <path class="slab2" d="M937 1034H973V1063H937z"/>
        <path class="pitd" d="M933 927H937V1034H930V1005H933zM973 927H981V1063H973zM1323 1063H1330V1256H1323z"/>
        <path class="wedge" d="M1166 927H1192L1208 956H1181zM1077 1063H1092L1126 1126H1114z"/>
        <path class="pit" d="M643 1193H664V1285H643zM1080 1193H1169V1256H908V1237H1080z"/>
        <path class="pitd" d="M900 1237H908V1256H900z"/>
        <path class="ol" d="M664 1193H789V1237H705V1256H664zM849 1193H1080V1237H849zM1591 1193H1652V1256H1591zM1958 1126H2122V1150H1958z"/>
        <path class="old" d="M830 1193H849V1237H830zM1312 1193H1323V1256H1312z"/>
        <path class="sel" d="M1692 1005H1958V1256H1692z"/>
        <path class="seld" d="M1685 1005H1692V1256H1685z"/>

        <polygon class="guide" points=${ring(1598, 884, 570, 72)}/>
        <circle class="guide" cx="1028" cy="884" r="46"/><circle class="guide" cx="2168" cy="884" r="46"/><circle class="guide" cx="1598" cy="314" r="46"/>

        <rect class="plate" x="671" y="1028" width="16" height="21"/>
        <text class="note end" x="643" y="1048">ET<tspan class="ink">N</tspan></text>
        <text class="note" x="751" y="1049">9000</text><text class="note" x="896" y="1049">2000</text>
        <text class="note" x="1130" y="1049">3000</text><text class="note" x="1213" y="1049">D-19</text>
        <text class="note" x="1620" y="1049">9000</text><text class="note" x="2083" y="1049">D-17</text>

        <path class="axis" d="M643 1038H2245"/>
        <path class="hint" d="M872 1038H973M1340 1038H1515M1958 1038H2058" stroke-dasharray="14 2 5 1"/>
        <polygon class="node bold" points=${ring(663, 1038, 18, 8)}/>
        <polygon class="node" points=${ring(1243, 1038, 18, 8)}/>
        <polygon class="node" points=${ring(2113, 1038, 18, 8)}/>

        <text class="z" x="714" y="1352">Z</text>
        <path class="zf" d="M721 1353L728 1371H725V1387H717V1371H713z"/>

        <rect class="mark" x="888" y="753" width="428" height="314" rx="2"/>
        <rect class="mark red" x="1648" y="806" width="351" height="495" rx="2"/>
      </svg>
      <button class="fold" aria-label="收起面板"><svg viewBox="0 0 10 18"><path d="M8 2L2 9l6 7" fill="none" stroke="#9c9c9c" stroke-width="2"/></svg></button>`;
  }
}

@customElement("app-root")
class AppRoot extends LitElement {
  static styles = css`
    :host {
      display: flex; flex-direction: column; height: 100vh; overflow: hidden; background: #fff; color: #303030;
      font: 19px/24px "Noto Sans", "Noto Sans CJK SC", sans-serif;
    }
    gtj-ribbon, gtj-selectors { flex: none; }
    .work { flex: 1; display: flex; min-height: 0; }
    gtj-nav { width: 197px; flex: none; }
    .dock { width: 434px; flex: none; margin: 0 6px; display: flex; flex-direction: column; gap: 6px; }
    gtj-view { flex: 1; min-width: 0; }
  `;
  render() {
    return html`<gtj-ribbon></gtj-ribbon><gtj-selectors></gtj-selectors>
      <main class="work">
        <gtj-nav></gtj-nav>
        <div class="dock"><gtj-components></gtj-components><gtj-properties></gtj-properties></div>
        <gtj-view></gtj-view>
      </main>`;
  }
}
